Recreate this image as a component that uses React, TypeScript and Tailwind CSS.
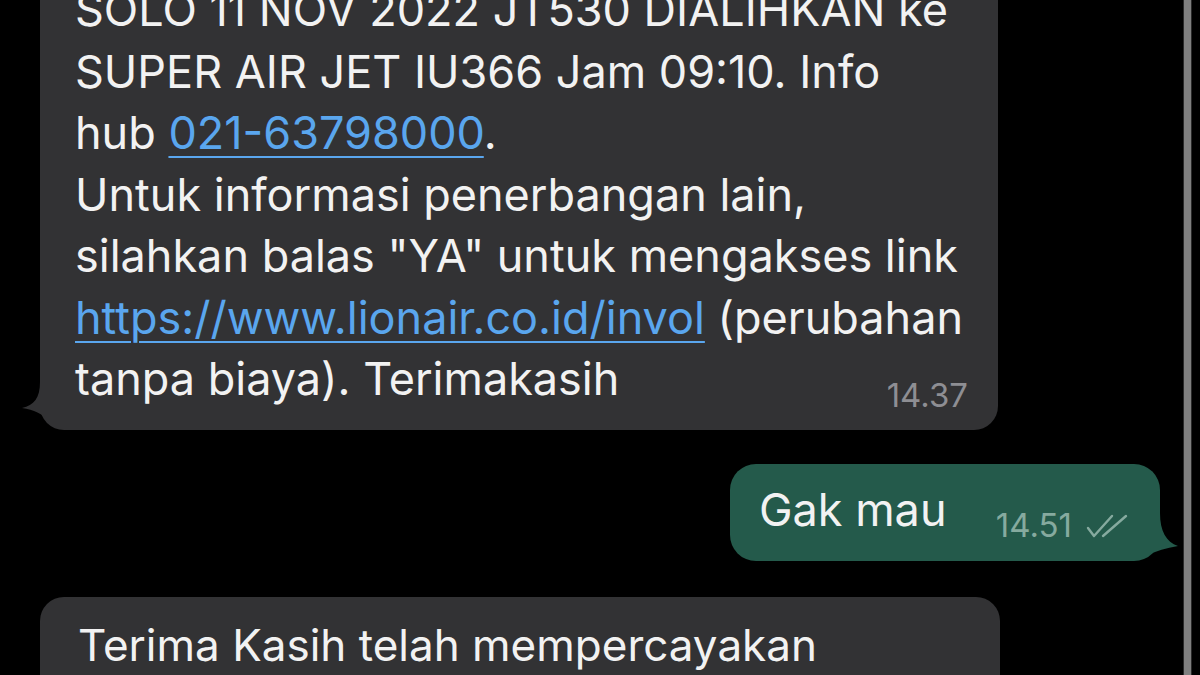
import React from "react";

const font = { fontFamily: "Inter, 'Liberation Sans', Arial, sans-serif" };

const lines: React.ReactNode[] = [
  "SOLO 11 NOV 2022 JT530 DIALIHKAN ke",
  "SUPER AIR JET IU366 Jam 09:10. Info",
  <>
    hub <span className="text-[#5aa6ee] underline decoration-2 underline-offset-[7px]">021-63798000</span>.
  </>,
  "Untuk informasi penerbangan lain,",
  'silahkan balas "YA" untuk mengakses link',
  <>
    <span className="text-[#5aa6ee] underline decoration-2 underline-offset-[7px]">https://www.lionair.co.id/invol</span> (perubahan
  </>,
];

function TailLeft({ color }: { color: string }) {
  return (
    <svg className="absolute -left-[18px] bottom-0" width="40" height="50" viewBox="0 0 40 50">
      <path d="M18 2 C18 18 12 25 0 28 C12 30 20 33 28 42 L40 42 L40 2 Z" fill={color} />
    </svg>
  );
}

function TailRight({ color }: { color: string }) {
  return (
    <svg className="absolute -right-[18px] bottom-0" width="40" height="50" viewBox="0 0 40 50">
      <path d="M22 2 C22 20 28 31 40 35 C28 37 18 40 10 44 L0 44 L0 2 Z" fill={color} />
    </svg>
  );
}

function DoubleCheck() {
  return (
    <svg width="42" height="24" viewBox="0 0 42 24" fill="none" stroke="#86aa9f" strokeWidth="2.4" strokeLinecap="round" strokeLinejoin="round">
      <path d="M2 14 L8 22 L26 2" />
      <path d="M17 22 L40 2" />
    </svg>
  );
}

export default function App() {
  return (
    <div className="w-[1200px] h-[675px] overflow-hidden bg-black flex text-[#f2f2f2]" style={font}>
      <div className="w-[1183px] shrink-0 flex flex-col">
        {/* incoming message */}
        <div className="relative shrink-0 ml-[40px] w-[958px] -mt-[56px] bg-[#323234] rounded-[24px] pl-[35px] pr-[30px] pt-[35px] pb-[15px]">
          <div className="text-[45px] leading-[61.5px] whitespace-nowrap">
            {lines.map((l, i) => (
              <div key={i}>{l}</div>
            ))}
            <div className="flex items-baseline justify-between">
              <span>tanpa biaya). Terimakasih</span>
              <span className="text-[33px] text-[#8e8e93] translate-y-[12px]">14.37</span>
            </div>
          </div>
          <TailLeft color="#323234" />
        </div>

        {/* outgoing message */}
        <div className="self-end shrink-0 mr-[23px] mt-[34px] relative h-[97px] w-[430px] bg-[#245a4b] rounded-[26px] pl-[29px] pr-[32px] flex items-start justify-between">
          <span className="text-[45px] leading-none mt-[23px]">Gak mau</span>
          <div className="flex items-start gap-[14px]">
            <span className="text-[33px] text-[#86aa9f] leading-none mt-[45px]">14.51</span>
            <span className="mt-[50px]">
              <DoubleCheck />
            </span>
          </div>
          <TailRight color="#245a4b" />
        </div>

        {/* next incoming message */}
        <div className="shrink-0 ml-[40px] w-[960px] mt-[36px] bg-[#323234] rounded-[24px] pl-[38px] pt-[17px] h-[200px]">
          <div className="text-[44px] leading-[62px] whitespace-nowrap">Terima Kasih telah mempercayakan</div>
        </div>
      </div>

      {/* scroll indicator */}
      <div className="shrink-0 self-stretch w-[9px] min-w-[9px] bg-[#7f7f7f] border-x border-[#2a2a2a]" />
    </div>
  );
}
